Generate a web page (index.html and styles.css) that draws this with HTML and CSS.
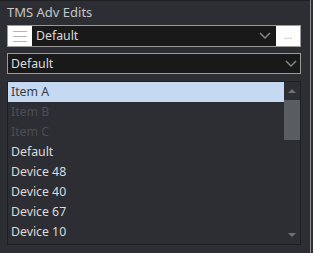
FILE: index.html
```html
<!DOCTYPE html>
<html lang="en">
<head>
    <meta charset="UTF-8">
    <title>TMS Adv Edits</title>
    <link rel="stylesheet" href="styles.css">
</head>
<body>
    <div class="panel">
        <div class="title">TMS Adv Edits</div>

        <div class="combo combo-preset">
            <div class="menu-btn">
                <span></span><span></span><span></span>
            </div>
            <div class="combo-text">Default</div>
            <svg class="chev" width="12" height="8" viewBox="0 0 12 8"><path d="M1 1 L6 6 L11 1" fill="none" stroke="#8a8a8a" stroke-width="1.4"/></svg>
            <div class="more-btn">...</div>
        </div>

        <div class="combo combo-plain">
            <div class="combo-text">Default</div>
            <svg class="chev" width="12" height="8" viewBox="0 0 12 8"><path d="M1 1 L6 6 L11 1" fill="none" stroke="#8a8a8a" stroke-width="1.4"/></svg>
        </div>

        <div class="list">
            <div class="items">
                <div class="item selected">Item A</div>
                <div class="item disabled">Item B</div>
                <div class="item disabled">Item C</div>
                <div class="item">Default</div>
                <div class="item">Device 48</div>
                <div class="item">Device 40</div>
                <div class="item">Device 67</div>
                <div class="item">Device 10</div>
            </div>
            <div class="scrollbar">
                <div class="arrow up"></div>
                <div class="thumb"></div>
                <div class="track"></div>
                <div class="arrow down"></div>
            </div>
        </div>
    </div>
    <div class="edge"></div>
</body>
</html>
```

FILE: styles.css
```css
body {
    margin: 0;
    width: 313px;
    height: 253px;
    background-color: #2d2e33;
    font-family: "Noto Sans", "Open Sans", sans-serif;
    font-size: 12.3px;
    color: #dcdcdc;
    display: flex;
    overflow: hidden;
}

.panel {
    width: 310px;
    border-top: 1px solid #1f2023;
    padding: 2px 0 0 7px;
    box-sizing: border-box;
}

.title {
    height: 20px;
    line-height: 18px;
    font-size: 13px;
    color: #c4c6c8;
}

.combo {
    width: 294px;
    height: 22px;
    border: 1px solid #9a9a9a;
    background-color: #19191a;
    box-sizing: border-box;
    display: flex;
    align-items: center;
}

.combo-preset {
    margin-top: 2px;
}

.combo-plain {
    margin-top: 6px;
    height: 21px;
}

.menu-btn {
    width: 24px;
    height: 20px;
    background-color: #ffffff;
    display: flex;
    flex-direction: column;
    justify-content: center;
    align-items: center;
    gap: 4px;
}

.menu-btn span {
    display: block;
    width: 14px;
    height: 1px;
    background-color: #b4b4b4;
}

.combo-text {
    flex: 1;
    padding-left: 4px;
    line-height: 20px;
}

.combo-plain .combo-text {
    padding-left: 3px;
}

.chev {
    margin-right: 5px;
}

.combo-plain .chev {
    margin-right: 3px;
}

.more-btn {
    width: 24px;
    height: 20px;
    background-color: #ffffff;
    color: #b4b4b4;
    text-align: center;
    line-height: 18px;
    font-size: 11px;
}

.list {
    margin-top: 7px;
    width: 294px;
    height: 164px;
    border: 1px solid #1e1f22;
    box-sizing: border-box;
    display: flex;
}

.items {
    flex: 1;
}

.item {
    height: 20px;
    line-height: 20px;
    padding-left: 3px;
}

.item.selected {
    background-color: #c5d9f3;
    color: #3a3c40;
}

.item.disabled {
    color: #4b4d51;
}

.scrollbar {
    width: 16px;
    display: flex;
    flex-direction: column;
}

.arrow {
    height: 18px;
    display: flex;
    align-items: center;
    justify-content: center;
}

.arrow.up::before {
    content: "";
    border-left: 4px solid transparent;
    border-right: 4px solid transparent;
    border-bottom: 4px solid #6e7073;
}

.arrow.down::before {
    content: "";
    border-left: 4px solid transparent;
    border-right: 4px solid transparent;
    border-top: 4px solid #6e7073;
}

.thumb {
    height: 40px;
    background-color: #5a5d60;
}

.track {
    flex: 1;
}

.edge {
    width: 1px;
    background-color: #8c8c8c;
}
```
